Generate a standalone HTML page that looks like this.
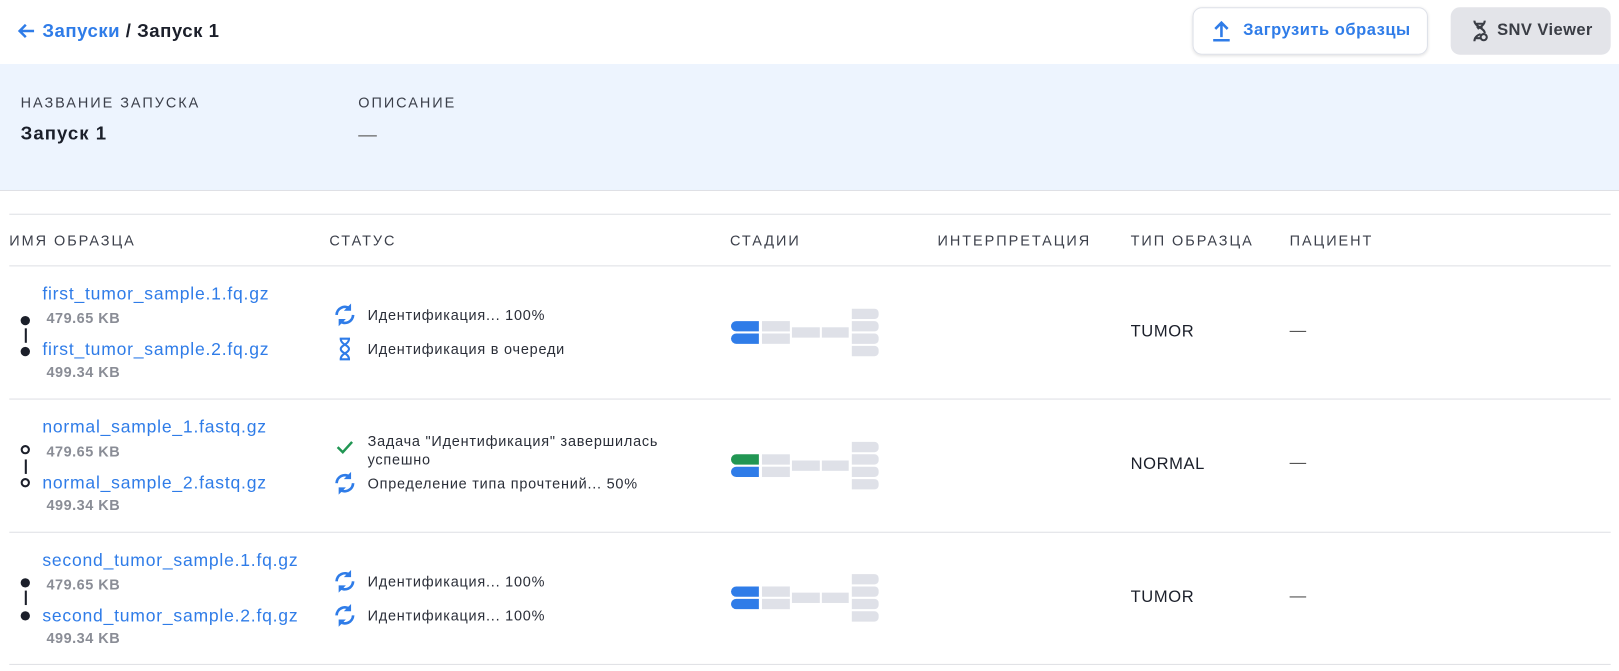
<!DOCTYPE html>
<html><head><meta charset="utf-8"><style>
*{box-sizing:border-box;margin:0;padding:0}
body{width:1619px;height:671px;overflow:hidden;background:#fff;font-family:"Liberation Sans","Noto Sans CJK SC",sans-serif;color:#1b1f2a;position:relative}
#w{position:absolute;left:0;top:0;width:1568px;height:650px;transform:scale(1.0325);transform-origin:0 0}
.a{position:absolute;white-space:nowrap}
.blue{color:#2f7ce8}
.hdr{font-size:14px;letter-spacing:1.9px;color:#3b3f4a}
.link{font-size:17px;color:#2f7ce8;letter-spacing:.75px}
.kb{font-size:14px;color:#8a8d96;font-weight:bold;letter-spacing:.5px}
.st{font-size:14px;color:#2a2e38;letter-spacing:.75px}
.line{position:absolute;left:9px;width:1551px;height:1px;background:#dfe0e5}
.bar{position:absolute;height:10px;background:#dfe1e8}
.dot{position:absolute;left:20px;width:9px;height:9px;border-radius:50%;background:#1b1f2a}
.odot{position:absolute;left:20px;width:9px;height:9px;border-radius:50%;border:2px solid #1b1f2a}
.vl{position:absolute;left:23.5px;width:2px;height:14px;background:#1b1f2a}
.val{font-size:16px;letter-spacing:.6px}
</style></head><body><div id="w">
<svg class="a" style="left:16px;top:22px" width="18" height="16" viewBox="0 0 18 16"><path d="M17 8H3M9 2L3 8l6 6" stroke="#2f7ce8" stroke-width="2.4" fill="none"/></svg>
<div class="a" style="left:41px;top:20px;font-size:18px;font-weight:bold;letter-spacing:.5px">
<span class="blue">Запуски</span> / Запуск 1</div>
<div class="a" style="left:1155px;top:7px;width:228px;height:46px;border:1.5px solid #dde0e8;border-radius:9px;box-shadow:0 1px 3px rgba(0,0,0,.12);font-size:16px;font-weight:bold;color:#2f7ce8;padding:13px 0 0 18px;letter-spacing:.5px">
<svg width="20" height="22" viewBox="0 0 20 22" style="position:absolute;left:17px;top:11px"><path d="M10 17V3M4 9l6-6 6 6M2 20h16" stroke="#2f7ce8" stroke-width="2.5" fill="none"/></svg>
<span style="margin-left:30px">Загрузить образцы</span></div>
<div class="a" style="left:1405px;top:7px;width:155px;height:46px;background:#e3e4e9;border-radius:9px;font-size:16px;font-weight:bold;color:#3a3d45;padding:14px 0 0 45px;letter-spacing:.4px">
<svg width="18" height="22" viewBox="0 0 18 22" style="position:absolute;left:20px;top:12px"><path d="M3 1c0 6 10 7 10 12M13 1c0 4-4 6-7 8M3 21c0-4 3-6 6-7M4 4h8M5 7h6M4 18h5" stroke="#3a3d45" stroke-width="2" fill="none"/><circle cx="12" cy="17" r="3" stroke="#3a3d45" stroke-width="2" fill="none"/></svg>
SNV Viewer</div>
<div class="a" style="left:0;top:62px;width:1619px;height:123px;background:#edf4fe;border-bottom:1px solid #dfe0e5"></div>
<div class="a hdr" style="left:20px;top:91px">НАЗВАНИЕ ЗАПУСКА</div>
<div class="a hdr" style="left:347px;top:91px">ОПИСАНИЕ</div>
<div class="a" style="left:20px;top:119px;font-size:18px;font-weight:bold;letter-spacing:1px">Запуск 1</div>
<div class="a" style="left:347px;top:120px;font-size:18px;color:#666">—</div>

<div class="line" style="top:207px"></div>
<div class="a hdr" style="left:9px;top:225px">ИМЯ ОБРАЗЦА</div>
<div class="a hdr" style="left:319px;top:225px">СТАТУС</div>
<div class="a hdr" style="left:707px;top:225px">СТАДИИ</div>
<div class="a hdr" style="left:908px;top:225px">ИНТЕРПРЕТАЦИЯ</div>
<div class="a hdr" style="left:1095px;top:225px">ТИП ОБРАЗЦА</div>
<div class="a hdr" style="left:1249px;top:225px">ПАЦИЕНТ</div>
<div class="line" style="top:257px"></div>
<div class="line" style="top:386px"></div>
<div class="line" style="top:515px"></div>
<div class="line" style="top:643px"></div>

<div class="a link" style="left:41px;top:275px">first_tumor_sample.1.fq.gz</div>
<div class="a kb" style="left:45px;top:300px">479.65 KB</div>
<div class="a link" style="left:41px;top:329px">first_tumor_sample.2.fq.gz</div>
<div class="a kb" style="left:45px;top:352px">499.34 KB</div>
<div class="dot" style="top:306px"></div><div class="vl" style="top:318px"></div><div class="dot" style="top:336px"></div>

<div class="a link" style="left:41px;top:404px">normal_sample_1.fastq.gz</div>
<div class="a kb" style="left:45px;top:429px">479.65 KB</div>
<div class="a link" style="left:41px;top:458px">normal_sample_2.fastq.gz</div>
<div class="a kb" style="left:45px;top:481px">499.34 KB</div>
<div class="odot" style="top:431px"></div><div class="vl" style="top:445px"></div><div class="odot" style="top:463px"></div>

<div class="a link" style="left:41px;top:533px">second_tumor_sample.1.fq.gz</div>
<div class="a kb" style="left:45px;top:558px">479.65 KB</div>
<div class="a link" style="left:41px;top:587px">second_tumor_sample.2.fq.gz</div>
<div class="a kb" style="left:45px;top:610px">499.34 KB</div>
<div class="dot" style="top:560px"></div><div class="vl" style="top:572px"></div><div class="dot" style="top:592px"></div>

<svg width="0" height="0" style="position:absolute"><defs><symbol id="rf" viewBox="0 0 24 24"><path d="M4 12a8 8 0 0 1 13-6M20 12a8 8 0 0 1-13 6" stroke="#2f7ce8" stroke-width="2.6" fill="none"/><path d="M18 1v7h-7z" fill="#2f7ce8"/><path d="M6 23v-7h7z" fill="#2f7ce8"/></symbol></defs></svg>
<svg class="a" style="left:322px;top:293px" width="24" height="24"><use href="#rf"/></svg>
<div class="a st" style="left:356px;top:297px">Идентификация... 100%</div>
<svg class="a" style="left:326px;top:326px" width="16" height="24" viewBox="0 0 16 24"><path d="M3 2h10M3 22h10M4 2c0 6 8 6 8 10s-8 4-8 10M12 2c0 6-8 6-8 10s8 4 8 10" stroke="#2f7ce8" stroke-width="2" fill="none"/></svg>
<div class="a st" style="left:356px;top:330px">Идентификация в очереди</div>

<svg class="a" style="left:325px;top:425px" width="18" height="16" viewBox="0 0 18 16"><path d="M2 8l5 5 9-10" stroke="#219653" stroke-width="2.4" fill="none"/></svg>
<div class="a st" style="left:356px;top:418px;line-height:18px">Задача "Идентификация" завершилась<br>успешно</div>
<svg class="a" style="left:322px;top:456px" width="24" height="24"><use href="#rf"/></svg>
<div class="a st" style="left:356px;top:460px">Определение типа прочтений... 50%</div>

<svg class="a" style="left:322px;top:551px" width="24" height="24"><use href="#rf"/></svg>
<div class="a st" style="left:356px;top:555px">Идентификация... 100%</div>
<svg class="a" style="left:322px;top:584px" width="24" height="24"><use href="#rf"/></svg>
<div class="a st" style="left:356px;top:588px">Идентификация... 100%</div>

<div style="position:absolute;left:0;top:0">
<div class="bar" style="left:708px;top:311px;width:27px;background:#2f7ce8;border-radius:5px 0 0 5px"></div>
<div class="bar" style="left:708px;top:323px;width:27px;background:#2f7ce8;border-radius:5px 0 0 5px"></div>
<div class="bar" style="left:738px;top:311px;width:27px"></div><div class="bar" style="left:738px;top:323px;width:27px"></div>
<div class="bar" style="left:767px;top:317px;width:27px"></div><div class="bar" style="left:796px;top:317px;width:26px"></div>
<div class="bar" style="left:825px;top:299px;width:26px;border-radius:0 4px 4px 0"></div><div class="bar" style="left:825px;top:311px;width:26px;border-radius:0 4px 4px 0"></div><div class="bar" style="left:825px;top:323px;width:26px;border-radius:0 4px 4px 0"></div><div class="bar" style="left:825px;top:335px;width:26px;border-radius:0 4px 4px 0"></div>
</div>
<div style="position:absolute;left:0;top:129px">
<div class="bar" style="left:708px;top:311px;width:27px;background:#219653;border-radius:5px 0 0 5px"></div>
<div class="bar" style="left:708px;top:323px;width:27px;background:#2f7ce8;border-radius:5px 0 0 5px"></div>
<div class="bar" style="left:738px;top:311px;width:27px"></div><div class="bar" style="left:738px;top:323px;width:27px"></div>
<div class="bar" style="left:767px;top:317px;width:27px"></div><div class="bar" style="left:796px;top:317px;width:26px"></div>
<div class="bar" style="left:825px;top:299px;width:26px;border-radius:0 4px 4px 0"></div><div class="bar" style="left:825px;top:311px;width:26px;border-radius:0 4px 4px 0"></div><div class="bar" style="left:825px;top:323px;width:26px;border-radius:0 4px 4px 0"></div><div class="bar" style="left:825px;top:335px;width:26px;border-radius:0 4px 4px 0"></div>
</div>
<div style="position:absolute;left:0;top:257px">
<div class="bar" style="left:708px;top:311px;width:27px;background:#2f7ce8;border-radius:5px 0 0 5px"></div>
<div class="bar" style="left:708px;top:323px;width:27px;background:#2f7ce8;border-radius:5px 0 0 5px"></div>
<div class="bar" style="left:738px;top:311px;width:27px"></div><div class="bar" style="left:738px;top:323px;width:27px"></div>
<div class="bar" style="left:767px;top:317px;width:27px"></div><div class="bar" style="left:796px;top:317px;width:26px"></div>
<div class="bar" style="left:825px;top:299px;width:26px;border-radius:0 4px 4px 0"></div><div class="bar" style="left:825px;top:311px;width:26px;border-radius:0 4px 4px 0"></div><div class="bar" style="left:825px;top:323px;width:26px;border-radius:0 4px 4px 0"></div><div class="bar" style="left:825px;top:335px;width:26px;border-radius:0 4px 4px 0"></div>
</div>

<div class="a val" style="left:1095px;top:313px">TUMOR</div>
<div class="a val" style="left:1249px;top:312px;color:#555">—</div>
<div class="a val" style="left:1095px;top:441px">NORMAL</div>
<div class="a val" style="left:1249px;top:440px;color:#555">—</div>
<div class="a val" style="left:1095px;top:570px">TUMOR</div>
<div class="a val" style="left:1249px;top:569px;color:#555">—</div>
</div></body></html>
